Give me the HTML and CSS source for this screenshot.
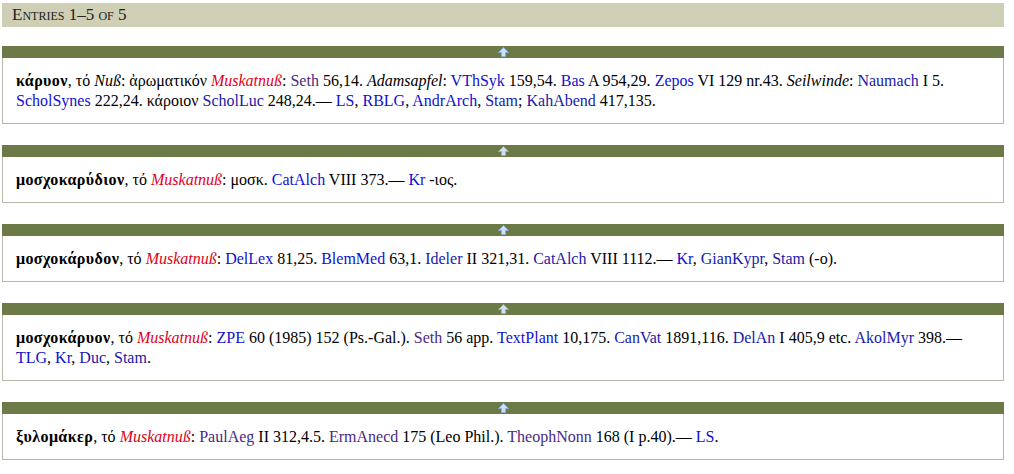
FILE: index.html
```html
<!DOCTYPE html>
<html lang="de">
<head>
<meta charset="utf-8">
<title>Entries</title>
<link rel="stylesheet" href="styles.css">
</head>
<body>
<div class="page">
  <div class="header">Entries 1–5 of 5</div>

  <div class="entry">
    <div class="bar"><a class="top" href="#"><svg width="11" height="10" viewBox="0 0 11 10"><path d="M5.5 0.5 L10.5 5.5 L7.5 5.5 L7.5 9.5 L3.5 9.5 L3.5 5.5 L0.5 5.5 Z" fill="#cfe0f2" stroke="#8fb0d6" stroke-width="1"/></svg></a></div>
    <div class="body">
      <b>κάρυον</b>, τό <i>Nuß</i>: ἀρωματικόν <i class="de">Muskatnuß</i>: <a class="v" href="#">Seth</a> 56,14. <i>Adamsapfel</i>: <a href="#">VThSyk</a> 159,54. <a href="#">Bas</a> A 954,29. <a href="#">Zepos</a> VI 129 nr.43. <i>Seilwinde</i>: <a class="n" href="#">Naumach</a> I 5. <a href="#">ScholSynes</a> 222,24. κάροιον <a class="n" href="#">ScholLuc</a> 248,24.— <a href="#">LS</a>, <a href="#">RBLG</a>, <a href="#">AndrArch</a>, <a class="n" href="#">Stam</a>; <a class="n" href="#">KahAbend</a> 417,135.
    </div>
  </div>

  <div class="entry">
    <div class="bar"><a class="top" href="#"><svg width="11" height="10" viewBox="0 0 11 10"><path d="M5.5 0.5 L10.5 5.5 L7.5 5.5 L7.5 9.5 L3.5 9.5 L3.5 5.5 L0.5 5.5 Z" fill="#cfe0f2" stroke="#8fb0d6" stroke-width="1"/></svg></a></div>
    <div class="body">
      <b>μοσχοκαρύδιον</b>, τό <i class="de">Muskatnuß</i>: μοσκ. <a href="#">CatAlch</a> VIII 373.— <a href="#">Kr</a> -ιος.
    </div>
  </div>

  <div class="entry">
    <div class="bar"><a class="top" href="#"><svg width="11" height="10" viewBox="0 0 11 10"><path d="M5.5 0.5 L10.5 5.5 L7.5 5.5 L7.5 9.5 L3.5 9.5 L3.5 5.5 L0.5 5.5 Z" fill="#cfe0f2" stroke="#8fb0d6" stroke-width="1"/></svg></a></div>
    <div class="body">
      <b>μοσχοκάρυδον</b>, τό <i class="de">Muskatnuß</i>: <a href="#">DelLex</a> 81,25. <a href="#">BlemMed</a> 63,1. <a class="n" href="#">Ideler</a> II 321,31. <a class="n" href="#">CatAlch</a> VIII 1112.— <a href="#">Kr</a>, <a class="n" href="#">GianKypr</a>, <a class="n" href="#">Stam</a> (-ο).
    </div>
  </div>

  <div class="entry">
    <div class="bar"><a class="top" href="#"><svg width="11" height="10" viewBox="0 0 11 10"><path d="M5.5 0.5 L10.5 5.5 L7.5 5.5 L7.5 9.5 L3.5 9.5 L3.5 5.5 L0.5 5.5 Z" fill="#cfe0f2" stroke="#8fb0d6" stroke-width="1"/></svg></a></div>
    <div class="body">
      <b>μοσχοκάρυον</b>, τό <i class="de">Muskatnuß</i>: <a href="#">ZPE</a> 60 (1985) 152 (Ps.-Gal.). <a class="v" href="#">Seth</a> 56 app. <a href="#">TextPlant</a> 10,175. <a class="n" href="#">CanVat</a> 1891,116. <a class="n" href="#">DelAn</a> I 405,9 etc. <a class="n" href="#">AkolMyr</a> 398.— <a href="#">TLG</a>, <a href="#">Kr</a>, <a class="n" href="#">Duc</a>, <a class="n" href="#">Stam</a>.
    </div>
  </div>

  <div class="entry">
    <div class="bar"><a class="top" href="#"><svg width="11" height="10" viewBox="0 0 11 10"><path d="M5.5 0.5 L10.5 5.5 L7.5 5.5 L7.5 9.5 L3.5 9.5 L3.5 5.5 L0.5 5.5 Z" fill="#cfe0f2" stroke="#8fb0d6" stroke-width="1"/></svg></a></div>
    <div class="body">
      <b>ξυλομάκερ</b>, τό <i class="de">Muskatnuß</i>: <a class="v" href="#">PaulAeg</a> II 312,4.5. <a class="v" href="#">ErmAnecd</a> 175 (Leo Phil.). <a class="v" href="#">TheophNonn</a> 168 (I p.40).— <a href="#">LS</a>.
    </div>
  </div>
</div>
</body>
</html>
```

FILE: styles.css
```css
html, body {
  margin: 0;
  padding: 0;
  background: #ffffff;
}
body {
  font-family: "Liberation Serif", "Times New Roman", "DejaVu Serif", serif;
  font-size: 16px;
  color: #000000;
}
.page {
  width: 1002px;
  margin-left: 2px;
  padding-top: 3px;
}
.header {
  height: 24px;
  background: #cfcfb6;
  padding-left: 10px;
  font-size: 17px;
  font-variant: small-caps;
  line-height: 24px;
  color: #222222;
  margin-bottom: 19px;
}
.entry {
  margin-bottom: 21px;
}
.bar {
  height: 12px;
  background: #6b7a47;
  display: flex;
  justify-content: center;
  align-items: center;
}
.top {
  display: flex;
  width: 11px;
  height: 10px;
}
.top svg {
  display: block;
}
.body {
  border: 1px solid #b8b8a8;
  border-top: none;
  padding: 13px 20px 12px 13px;
  line-height: 20px;
}
.body b {
  letter-spacing: 0.4px;
}
.body a {
  color: #1010d0;
  text-decoration: none;
}
.body a.n {
  color: #1a1aa8;
}
.body a.v {
  color: #4a2a82;
}
.de {
  color: #e0001a;
}
```
